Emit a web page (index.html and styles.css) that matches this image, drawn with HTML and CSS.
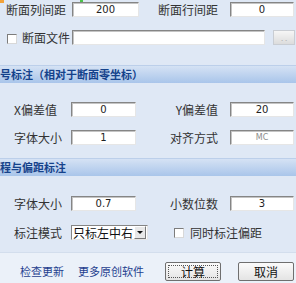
FILE: index.html
```html
<!DOCTYPE html>
<html lang="zh">
<head>
  <meta charset="UTF-8" />
  <title>断面标注设置</title>
  <link rel="stylesheet" href="styles.css">
</head>
<body>
  <div class="dialog">
    <span class="mark-orange"></span>
    <span class="mark-green"></span>

    <!-- 断面间距 -->
    <div class="row row-1">
      <div class="cell">
        <span class="lbl lbl-first">断面列间距</span>
        <div class="inp inp-wide">200</div>
      </div>
      <div class="cell">
        <span class="lbl-r">断面行间距</span>
        <div class="inp inp-r">0</div>
      </div>
    </div>

    <div class="row row-2">
      <span class="check check-file"></span>
      <span class="lbl-file">断面文件</span>
      <div class="inp inp-file"></div>
      <div class="btn-dots">. .</div>
    </div>

    <div class="band band-1">号标注（相对于断面零坐标）</div>

    <div class="row row-3">
      <div class="cell">
        <span class="lbl">X偏差值</span>
        <div class="inp">0</div>
      </div>
      <div class="cell">
        <span class="lbl-r">Y偏差值</span>
        <div class="inp inp-r">20</div>
      </div>
    </div>

    <div class="row row-4">
      <div class="cell">
        <span class="lbl">字体大小</span>
        <div class="inp">1</div>
      </div>
      <div class="cell">
        <span class="lbl-r">对齐方式</span>
        <div class="inp inp-r inp-off">MC</div>
      </div>
    </div>

    <div class="band band-2">程与偏距标注</div>

    <div class="row row-5">
      <div class="cell">
        <span class="lbl">字体大小</span>
        <div class="inp">0.7</div>
      </div>
      <div class="cell">
        <span class="lbl-r">小数位数</span>
        <div class="inp inp-r">3</div>
      </div>
    </div>

    <div class="row row-6">
      <div class="cell">
        <span class="lbl">标注模式</span>
        <div class="select">
          <span class="select-text">只标左中右</span>
          <span class="select-arrow"><i></i></span>
        </div>
      </div>
      <div class="cell">
        <span class="check check-offset"></span>
        <span class="lbl-check">同时标注偏距</span>
      </div>
    </div>

    <!-- 底部 -->
    <div class="footer">
      <span class="link link-update">检查更新</span>
      <span class="link link-more">更多原创软件</span>
      <div class="btn btn-ok"><span>计算</span></div>
      <div class="btn btn-cancel">取消</div>
    </div>
  </div>
</body>
</html>
```

FILE: styles.css
```css
html, body {
  margin: 0;
  padding: 0;
}

body {
  font-family: "Noto Sans CJK SC", sans-serif;
  font-size: 12px;
  color: #333;
}

.dialog {
  position: relative;
  width: 296px;
  height: 283px;
  overflow: hidden;
  background: #dfe8f5;
  display: flex;
  flex-direction: column;
}

.mark-orange {
  position: absolute;
  top: 0; left: 0;
  width: 4px; height: 3px;
  background: #f2a23a;
}

.mark-green {
  position: absolute;
  top: 0; left: 80px;
  width: 3px; height: 2px;
  background: #4cc24a;
}

.row {
  display: flex;
  align-items: center;
  height: 15px;
  flex-shrink: 0;
}

.row-1 { margin-top: 2px; }
.row-2 { margin-top: 13px; }
.row-3 { margin-top: 19px; }
.row-4 { margin-top: 13px; }
.row-5 { margin-top: 20px; }
.row-6 { margin-top: 14px; }

.cell {
  width: 148px;
  height: 15px;
  display: flex;
  align-items: center;
}

.lbl {
  width: 71px;
  padding-left: 14px;
  box-sizing: border-box;
  line-height: 15px;
  white-space: nowrap;
}

.lbl-first {
  padding-left: 6px;
}

.lbl-r {
  width: 82px;
  padding-right: 12px;
  box-sizing: border-box;
  text-align: right;
  line-height: 15px;
  white-space: nowrap;
}

.inp {
  width: 65px;
  height: 15px;
  box-sizing: border-box;
  background: #fff;
  border: 1px solid;
  border-color: #858585 #e6e6e6 #e6e6e6 #858585;
  box-shadow: inset 1px 1px 0 #c4c4c4;
  font-family: "DejaVu Sans", sans-serif;
  font-size: 10px;
  line-height: 13px;
  text-align: center;
  color: #222;
}

.inp-wide {
  width: 67px;
  margin-left: 1px;
}

.inp-r {
  width: 64px;
}

.inp-off {
  color: #8c8c8c;
  font-size: 8px;
}

.check {
  width: 10px;
  height: 10px;
  box-sizing: border-box;
  background: #fff;
  border: 1px solid;
  border-color: #7c7c7c #d8d8d8 #d8d8d8 #7c7c7c;
}

.check-file {
  margin-left: 7px;
  margin-top: 3px;
}

.lbl-file {
  width: 55px;
  padding-left: 5px;
  box-sizing: border-box;
  line-height: 15px;
  white-space: nowrap;
}

.inp-file {
  width: 193px;
}

.btn-dots {
  width: 22px;
  height: 15px;
  margin-left: 8px;
  box-sizing: border-box;
  border: 1px solid #c9cdd3;
  background: linear-gradient(#f6f6f6, #dcdcdc);
  color: #b0b0b0;
  font-size: 8px;
  line-height: 13px;
  text-align: center;
}

.band {
  flex-shrink: 0;
  margin-top: 20px;
  height: 18px;
  box-sizing: border-box;
  border-top: 1px solid #bccfea;
  background: linear-gradient(#d5e2f4, #a9c5ea);
  color: #15428b;
  font-weight: bold;
  font-size: 11px;
  line-height: 17px;
  white-space: nowrap;
}

.band-2 {
  margin-top: 13px;
}

.select {
  width: 77px;
  height: 15px;
  box-sizing: border-box;
  background: #fff;
  border: 1px solid;
  border-color: #858585 #e6e6e6 #e6e6e6 #858585;
  display: flex;
  align-items: center;
}

.select-text {
  flex: 1;
  padding-left: 1px;
  line-height: 13px;
  font-size: 12px;
  color: #111;
  white-space: nowrap;
}

.select-arrow {
  width: 10px;
  height: 11px;
  margin-right: 1px;
  background: #e8e8e8;
  border: 1px solid;
  border-color: #fff #7a7a7a #7a7a7a #fff;
  display: flex;
  align-items: center;
  justify-content: center;
}

.select-arrow i {
  width: 0;
  height: 0;
  border-left: 3px solid transparent;
  border-right: 3px solid transparent;
  border-top: 3px solid #111;
}

.check-offset {
  margin-left: 26px;
}

.lbl-check {
  padding-left: 6px;
  line-height: 15px;
  white-space: nowrap;
}

.footer {
  flex: 1;
  margin-top: 12px;
  background: #ebf1f9;
  border-top: 1px solid #d3deed;
  display: flex;
  align-items: flex-start;
  padding-top: 9px;
}

.link {
  color: #1f3f8f;
  font-size: 11px;
  line-height: 19px;
  white-space: nowrap;
}

.link-update {
  margin-left: 20px;
}

.link-more {
  margin-left: 14px;
}

.btn {
  width: 56px;
  height: 19px;
  box-sizing: border-box;
  border: 1px solid #6f6f6f;
  border-radius: 2px;
  background: linear-gradient(#fbfbfb, #e4e4e4);
  color: #111;
  line-height: 17px;
  text-align: center;
  display: flex;
  align-items: center;
  justify-content: center;
}

.btn-ok {
  margin-left: 21px;
  padding: 2px;
}

.btn-ok span {
  flex: 1;
  align-self: stretch;
  border: 1px dotted #555;
  line-height: 11px;
}

.btn-cancel {
  margin-left: 17px;
}
```
